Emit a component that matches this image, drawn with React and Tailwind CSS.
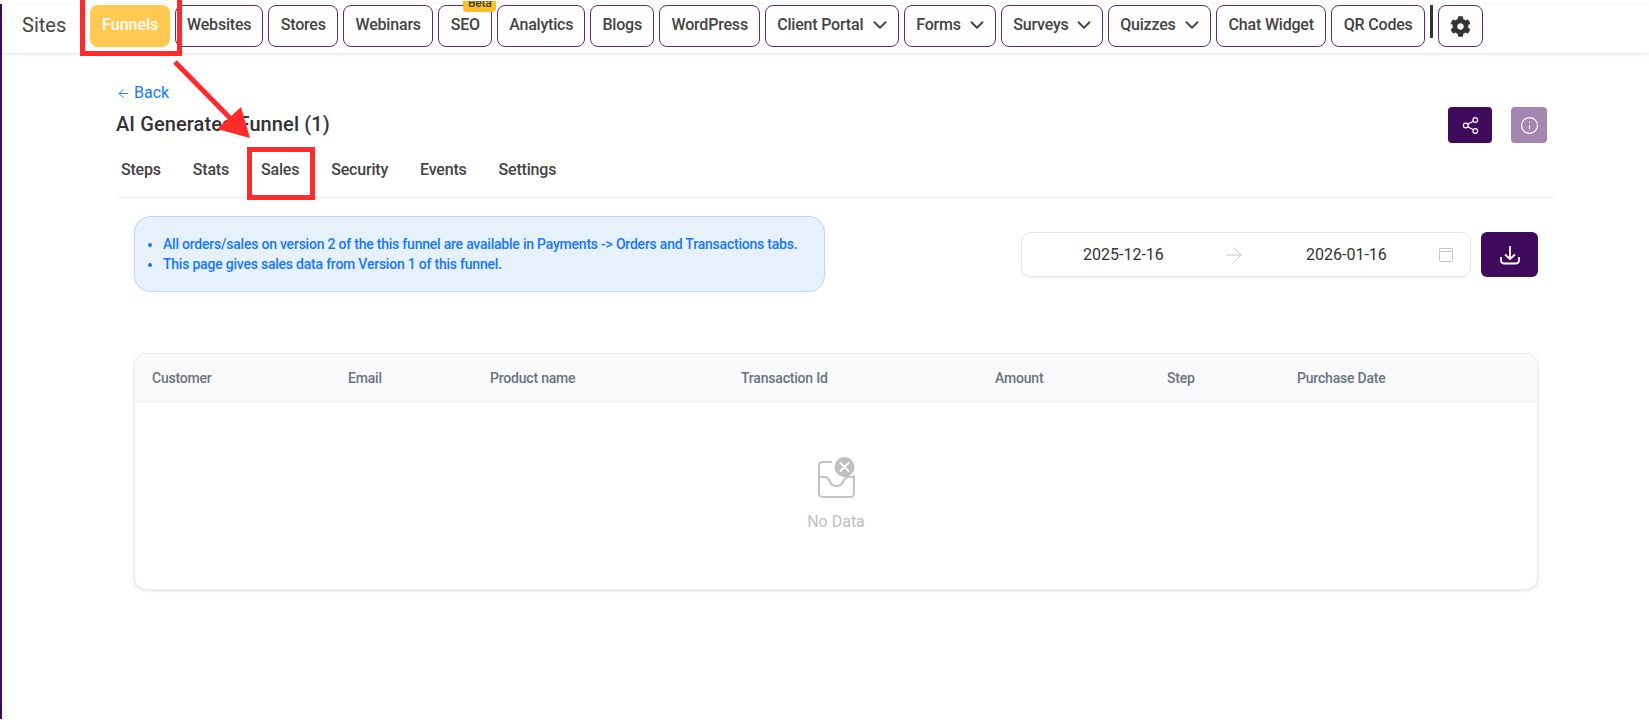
import { ArrowLeft, ArrowRight, ChevronDown, Info, Share2 } from "lucide-react";
import { FaCog } from "react-icons/fa";

const navItems = [
  { label: "Websites", width: "w-[88px]" },
  { label: "Stores", width: "w-[70px]" },
  { label: "Webinars", width: "w-[90px]" },
  { label: "SEO", width: "w-[54px]", badge: true },
  { label: "Analytics", width: "w-[88px]" },
  { label: "Blogs", width: "w-[64px]" },
  { label: "WordPress", width: "w-[101px]" },
  { label: "Client Portal", width: "w-[134px]", menu: true },
  { label: "Forms", width: "w-[92px]", menu: true },
  { label: "Surveys", width: "w-[102px]", menu: true },
  { label: "Quizzes", width: "w-[103px]", menu: true },
  { label: "Chat Widget", width: "w-[110px]" },
  { label: "QR Codes", width: "w-[94px]" },
];

const tabs = ["Steps", "Stats", "Sales", "Security", "Events", "Settings"];

const columns = ["Customer", "Email", "Product name", "Transaction Id", "Amount", "Step", "Purchase Date"];

function NavButton({ item }) {
  return (
    <button
      className={`relative flex h-[42px] items-center rounded-lg border border-[#5b2a80] bg-white pb-[2px] text-base font-medium tracking-[-0.2px] text-[#444] ${item.width} ${
        item.menu ? "justify-between pl-[11px] pr-[7px]" : "justify-center"
      }`}
    >
      {item.badge && (
        <span className="absolute -top-[5px] left-[24px] flex h-[11px] w-[33px] items-end justify-center overflow-hidden rounded-b bg-[#fbbf24] pb-[3px] text-xs leading-[12px] text-[#444]">
          Beta
        </span>
      )}
      {item.label}
      {item.menu && <ChevronDown size={22} strokeWidth={2} />}
    </button>
  );
}

function InboxIcon() {
  return (
    <svg width="37" height="42" viewBox="0 0 37 42" fill="none">
      <path
        d="M14 5H4.500A3.500 3.500 0 0 0 1 8.500V36.500A3.500 3.500 0 0 0 4.500 40H32.500A3.500 3.500 0 0 0 36 36.500V18"
        stroke="#c4c4c4"
        strokeWidth="2.200"
      />
      <path
        d="M1 20H7C10 20 10.500 22 11.500 24C13 27.500 15.500 29 18.500 29C21.500 29 24 27.500 25.500 24C26.500 22 27 20 30 20H36"
        stroke="#c4c4c4"
        strokeWidth="2.200"
      />
      <circle cx="26.500" cy="10" r="10" fill="#bfbfbf" />
      <path d="M22 5.500L31 14.500M31 5.500L22 14.500" stroke="#fff" strokeWidth="1.800" />
    </svg>
  );
}

export default function App() {
  return (
    <div className="relative h-[723px] w-full overflow-hidden bg-white py-1 font-['Roboto',sans-serif]">
      <div className="h-full border-l-2 border-[#400a5c]">
        <header className="flex h-[49px] items-start gap-[5px] pl-5 shadow-[0_1px_4px_rgba(0,0,0,0.12)]">
          <span className="mr-[19px] mt-[7px] text-xl text-[#444]">Sites</span>
          <div className="flex items-start gap-[5px] pt-[1px]">
            <button className="flex h-[42px] w-[80px] items-center justify-center rounded-lg bg-[#ffc952] pb-[2px] text-base font-medium text-white">
              Funnels
            </button>
            {navItems.map((item) => (
              <NavButton key={item.label} item={item} />
            ))}
            <div className="h-[33px] w-[3px] bg-[#333]" />
            <button className="flex h-[42px] w-[45px] items-center justify-center rounded-lg border border-[#5b2a80] bg-white text-[#333]">
              <FaCog size={21} />
            </button>
          </div>
        </header>

        <main className="ml-[114px] w-[1440px]">
          <a className="mt-[31px] flex h-[18px] items-center gap-[3px] text-base leading-[18px] text-[#1677ff]">
            <ArrowLeft size={15} strokeWidth={1.5} />
            Back
          </a>
          <div className="mt-[5px] flex items-start justify-between">
            <h1 className="mt-[4px] text-xl leading-[27px] font-medium tracking-[0.1px] text-[#333]">AI Generated Funnel (1)</h1>
            <div className="mr-[9px] flex gap-[19px]">
              <button className="flex h-[36px] w-[44px] items-center justify-center rounded bg-[#400a5c] text-white">
                <Share2 size={19} strokeWidth={1.4} />
              </button>
              <button className="flex h-[36px] w-[36px] items-center justify-center rounded bg-[#a586b0] text-white">
                <Info size={19} strokeWidth={1.4} />
              </button>
            </div>
          </div>
          <nav className="mt-[1px] flex h-[54px] gap-[32px] border-b border-[#f0f0f0] pl-[5px] pt-[16px] text-base leading-[20px] font-medium tracking-[-0.2px] text-[#444]">
            {tabs.map((tab) => (
              <span key={tab}>{tab}</span>
            ))}
          </nav>

          <section className="px-[18px]">
            <div className="mt-[18px] flex items-start justify-between">
              <div className="flex h-[76px] w-[691px] items-center rounded-2xl border border-[#b9d8fb] bg-[#e6f1fc] pl-[28px]">
                <ul className="list-disc text-sm leading-[20px] font-medium tracking-[-0.22px] text-[#1677ff]">
                  <li>All orders/sales on version 2 of the this funnel are available in Payments -&gt; Orders and Transactions tabs.</li>
                  <li>This page gives sales data from Version 1 of this funnel.</li>
                </ul>
              </div>
              <div className="mt-[16px] flex gap-[10px]">
                <div className="flex h-[45px] w-[450px] items-center whitespace-nowrap rounded-[10px] border border-[#e5e5e5] bg-white text-base text-[#333] shadow-[0_1px_2px_rgba(0,0,0,0.05)]">
                  <span className="ml-[61px] w-[79px]">2025-12-16</span>
                  <ArrowRight size={24} strokeWidth={1} className="ml-[60px] text-[#c8c8c8]" />
                  <span className="ml-[60px] w-[79px]">2026-01-16</span>
                  <svg width="14" height="14" viewBox="0 0 14 14" fill="none" className="ml-[54px]">
                    <rect x="0.500" y="0.500" width="13" height="13" rx="1" stroke="#c4c4c4" />
                    <path d="M0.500 3.500H13.500" stroke="#c4c4c4" />
                  </svg>
                </div>
                <button className="flex h-[45px] w-[57px] items-center justify-center rounded-md bg-[#400a5c] text-white">
                  <svg width="20" height="20" viewBox="0 0 20 20" fill="none" stroke="currentColor" strokeWidth="1.800">
                    <path d="M10 1V14M5 9.500L10 14L15 9.500" />
                    <path d="M1 12V15C1 17 2 18.500 4 18.500H16C18 18.500 19 17 19 15V12" />
                  </svg>
                </button>
              </div>
            </div>

            <div className="mt-[61px] h-[237px] w-[1404px] overflow-hidden rounded-xl border border-[#ebebef] bg-white shadow-[0_1px_3px_rgba(0,0,0,0.12)]">
              <div className="grid h-[48px] grid-cols-[196px_142px_251px_254px_172px_130px_1fr] items-center border-b border-[#eceef1] bg-[#f9fafb] text-sm font-medium tracking-[-0.2px] text-[#6b7280]">
                {columns.map((col) => (
                  <span key={col} className="pl-[17px]">
                    {col}
                  </span>
                ))}
              </div>
              <div className="flex flex-col items-center pt-[55px]">
                <InboxIcon />
                <span className="mt-[11px] text-base leading-[24px] text-[#bfbfbf]">No Data</span>
              </div>
            </div>
          </section>
        </main>
      </div>

      {/* red annotations drawn over the page */}
      <div className="absolute left-[80px] top-[-5px] h-[61px] w-[102px] border-[5px] border-[#ff2a2a]" />
      <div className="absolute left-[247px] top-[147px] h-[53px] w-[68px] border-[5px] border-[#ff2a2a]" />
      <svg className="absolute left-0 top-0" width="320" height="160" viewBox="0 0 320 160" fill="none">
        <path d="M175 62L232 120" stroke="#ff2a2a" strokeWidth="5" />
        <polygon points="250,138 241,107 217,129" fill="#ff2a2a" />
      </svg>
    </div>
  );
}
